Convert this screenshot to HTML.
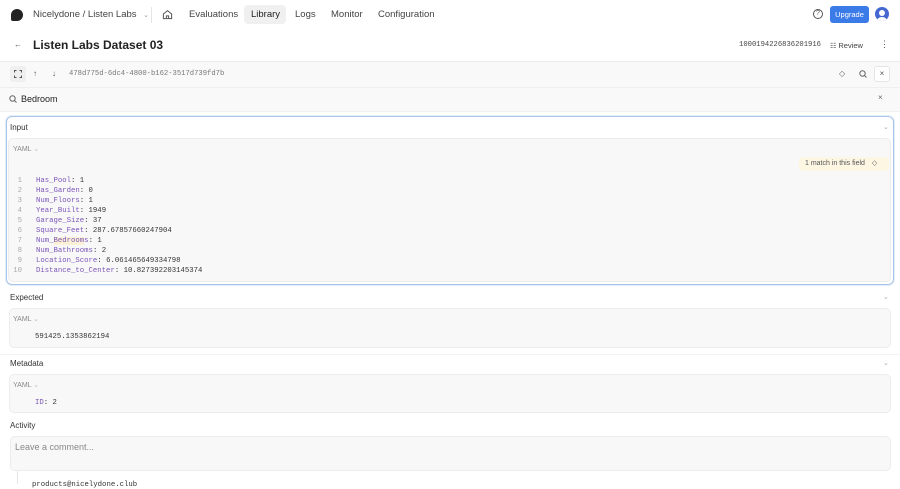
<!DOCTYPE html>
<html><head><style>
*{box-sizing:border-box;margin:0;padding:0}
body{width:900px;height:484px;overflow:hidden;background:#fff;font-family:"Liberation Sans",sans-serif;color:#222;position:relative}
.a{position:absolute;white-space:nowrap}
.mono{font-family:"Liberation Mono",monospace}
.nav{font-size:9.5px;color:#444}
.panel{position:absolute;background:#f8f8f8;border:1px solid #ececec;border-radius:5px}
.lbl{font-size:8px;color:#333}
.yaml{font-size:7px;color:#888}
.k{color:#7b55b8}
.code{font-size:7.3px;line-height:10px;color:#333}
.ln{font-size:7.3px;line-height:10px;color:#aaa;text-align:right;width:10px}
.chev{font-size:7px;color:#aaa}
</style></head><body>
<!-- nav -->
<div class="a" style="left:11px;top:9px;width:12px;height:12px;background:#222;border-radius:50% 50% 50% 2px"></div>
<div class="a nav" style="left:33px;top:9px;color:#444">Nicelydone / Listen Labs <span style="font-size:7px;color:#999;margin-left:4px">⌄</span></div>
<div class="a" style="left:151px;top:7px;width:1px;height:16px;background:#e5e5e5"></div>
<svg class="a" style="left:162px;top:9px" width="11" height="11" viewBox="0 0 12 12" fill="none" stroke="#555" stroke-width="1.1"><path d="M1.5 5.5L6 1.8l4.5 3.7V10.5h-9z"/><path d="M4.8 10.5V7.5h2.4v3"/></svg>
<div class="a nav" style="left:189px;top:9px">Evaluations</div>
<div class="a" style="left:244px;top:5px;width:42px;height:19px;background:#f0f0f0;border-radius:4px"></div>
<div class="a nav" style="left:251px;top:9px;color:#222">Library</div>
<div class="a nav" style="left:295px;top:9px">Logs</div>
<div class="a nav" style="left:331px;top:9px">Monitor</div>
<div class="a nav" style="left:378px;top:9px">Configuration</div>
<div class="a" style="left:813px;top:9px;width:10px;height:10px;border:1.1px solid #555;border-radius:50%;font-size:7px;text-align:center;line-height:8px;color:#555">?</div>
<div class="a" style="left:830px;top:6px;width:39px;height:17px;background:#3b7be8;border-radius:3px;color:#fff;font-size:7.5px;text-align:center;line-height:17px">Upgrade</div>
<div class="a" style="left:875px;top:7px;width:14px;height:14px;background:#4468d0;border-radius:50%;overflow:hidden"><div style="position:absolute;left:4px;top:3px;width:6px;height:6px;background:#fff;border-radius:50%"></div><div style="position:absolute;left:2px;top:10px;width:10px;height:8px;background:#fff;border-radius:50%"></div></div>
<!-- title -->
<div class="a" style="left:14px;top:40px;font-size:8px;color:#555">←</div>
<div class="a" style="left:33px;top:38px;font-size:12px;font-weight:bold;color:#222">Listen Labs Dataset 03</div>
<div class="a mono" style="left:739px;top:41px;font-size:7.2px;color:#444">1000194226836201916</div>
<div class="a" style="left:830px;top:41px;font-size:7.5px;color:#444"><span style="font-size:7px">☷</span> Review</div>
<div class="a" style="left:880px;top:39px;font-size:9px;color:#555">⋮</div>
<div class="a" style="left:0;top:61px;width:900px;height:1px;background:#ececec"></div>
<!-- toolbar -->
<div class="a" style="left:0;top:62px;width:900px;height:49px;background:#f9f9f9"></div>
<div class="a" style="left:0;top:87px;width:900px;height:1px;background:#efefef"></div>
<div class="a" style="left:10px;top:66px;width:16px;height:16px;background:#efefef;border-radius:3px"></div>
<svg class="a" style="left:14px;top:70px" width="8" height="8" viewBox="0 0 8 8" fill="none" stroke="#555" stroke-width="1"><path d="M0.5 2.5V0.5h2M5.5 0.5h2v2M7.5 5.5v2h-2M2.5 7.5h-2v-2"/></svg>
<div class="a" style="left:33px;top:69px;font-size:8px;color:#555">↑</div>
<div class="a" style="left:52px;top:69px;font-size:8px;color:#555">↓</div>
<div class="a mono" style="left:69px;top:70px;font-size:7.2px;color:#777">478d775d-6dc4-4800-b162-3517d739fd7b</div>
<div class="a" style="left:839px;top:69px;font-size:8px;color:#666">◇</div>
<svg class="a" style="left:859px;top:70px" width="8" height="8" viewBox="0 0 8 8" fill="none" stroke="#666" stroke-width="1"><circle cx="3.5" cy="3.5" r="2.7"/><path d="M5.5 5.5L7.5 7.5"/></svg>
<div class="a" style="left:874px;top:66px;width:16px;height:16px;border:1px solid #e5e5e5;background:#fff;border-radius:3px;font-size:8px;text-align:center;line-height:14px;color:#555">×</div>
<svg class="a" style="left:9px;top:95px" width="8" height="8" viewBox="0 0 8 8" fill="none" stroke="#666" stroke-width="1"><circle cx="3.5" cy="3.5" r="2.7"/><path d="M5.5 5.5L7.5 7.5"/></svg>
<div class="a" style="left:21px;top:94px;font-size:9px;color:#222">Bedroom</div>
<div class="a" style="left:878px;top:93px;font-size:8px;color:#666">×</div>
<div class="a" style="left:0;top:111px;width:900px;height:1px;background:#f0f0f0"></div>
<!-- input -->
<div class="a" style="left:6px;top:116px;width:888px;height:169px;border:1px solid #a9c4e6;border-radius:6px;box-shadow:0 0 0 1px #e4edf8"></div>
<div class="a lbl" style="left:10px;top:123px">Input</div>
<div class="a chev" style="left:883px;top:123px">⌄</div>
<div class="panel" style="left:8px;top:138px;width:883px;height:144px"></div>
<div class="a yaml" style="left:13px;top:145px">YAML <span style="color:#bbb">⌄</span></div>
<div class="a" style="left:799px;top:157px;width:90px;height:14px;background:#fdf6e3;border-radius:3px;font-size:7px;line-height:14px;color:#555;padding-left:6px">1 match in this field <span style="margin-left:5px">◇</span></div>
<div class="a ln mono" style="left:12px;top:176px">1<br>2<br>3<br>4<br>5<br>6<br>7<br>8<br>9<br>10</div>
<div class="a code mono" style="left:36px;top:176px"><span class="k">Has_Pool</span>: 1<br><span class="k">Has_Garden</span>: 0<br><span class="k">Num_Floors</span>: 1<br><span class="k">Year_Built</span>: 1949<br><span class="k">Garage_Size</span>: 37<br><span class="k">Square_Feet</span>: 287.67857660247904<br><span class="k">Num_<span style="background:#fbf1d6">Bedroom</span>s</span>: 1<br><span class="k">Num_Bathrooms</span>: 2<br><span class="k">Location_Score</span>: 6.061465649334798<br><span class="k">Distance_to_Center</span>: 10.827392203145374</div>
<!-- expected -->
<div class="a lbl" style="left:10px;top:293px">Expected</div>
<div class="a chev" style="left:883px;top:293px">⌄</div>
<div class="panel" style="left:9px;top:308px;width:882px;height:40px"></div>
<div class="a yaml" style="left:13px;top:315px">YAML <span style="color:#bbb">⌄</span></div>
<div class="a code mono" style="left:35px;top:332px">591425.1353862194</div>
<!-- metadata -->
<div class="a" style="left:0;top:354px;width:900px;height:1px;background:#f3f3f3"></div>
<div class="a lbl" style="left:10px;top:359px">Metadata</div>
<div class="a chev" style="left:883px;top:359px">⌄</div>
<div class="panel" style="left:9px;top:374px;width:882px;height:39px"></div>
<div class="a yaml" style="left:13px;top:381px">YAML <span style="color:#bbb">⌄</span></div>
<div class="a code mono" style="left:35px;top:398px"><span class="k">ID</span>: 2</div>
<!-- activity -->
<div class="a lbl" style="left:10px;top:421px">Activity</div>
<div class="panel" style="left:10px;top:436px;width:881px;height:35px"></div>
<div class="a" style="left:15px;top:442px;font-size:9px;color:#888">Leave a comment...</div>
<div class="a" style="left:17px;top:471px;width:1px;height:13px;background:#e5e5e5"></div>
<div class="a mono" style="left:32px;top:481px;font-size:7.3px;color:#333">products@nicelydone.club</div>
</body></html>
